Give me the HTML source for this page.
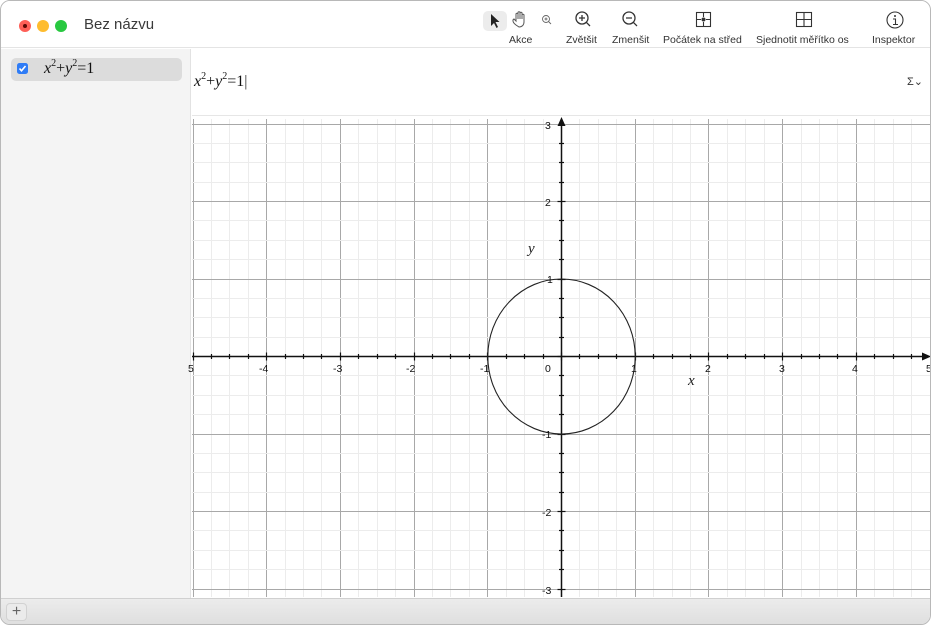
<!DOCTYPE html>
<html><head><meta charset="utf-8"><style>
*{margin:0;padding:0;box-sizing:border-box}
body{width:931px;height:625px;background:#fff;font-family:"Liberation Sans",sans-serif;overflow:hidden;position:relative}
.win{position:absolute;left:0;top:0;width:931px;height:625px;border:1px solid #b8b8b8;border-radius:10px;overflow:hidden;background:#fff}
.tb{position:absolute;left:0;top:0;width:931px;height:47px;border-bottom:1px solid #e4e4e4;background:#fff}
.dot{position:absolute;top:19px;width:12px;height:12px;border-radius:50%}
.title{position:absolute;left:83px;top:15px;font-size:15px;color:#3a3a3a}
.tl{position:absolute;top:33px;font-size:10.5px;color:#333;white-space:nowrap}
.side{position:absolute;left:0;top:48px;width:190px;height:549px;background:#f4f4f4;border-right:1px solid #e2e2e2}
.row{position:absolute;left:10px;top:57px;width:171px;height:23px;background:#dcdcdc;border-radius:5px}
.cb{position:absolute;left:16px;top:62px;width:11px;height:11px;background:#2f7cf6;border-radius:2.5px}
.cb svg{display:block}
.math{font-family:"Liberation Serif",serif;font-size:16px;color:#111;position:absolute}
.math i{font-style:italic}
.math sup{font-size:10px;vertical-align:7px;line-height:0}
.foot{position:absolute;left:0;top:597px;width:931px;height:28px;background:linear-gradient(#ececec,#dedede);border-top:1px solid #d0d0d0}
.plus{position:absolute;left:5px;top:602px;width:21px;height:18px;border:1px solid #d2d2d2;border-radius:4px;background:#ebebeb;font-size:16px;color:#666;text-align:center;line-height:16px}
</style></head><body><div class="win">
<div class="tb">
<div class="dot" style="left:18px;background:#fe5f57"></div>
<div style="position:absolute;left:22px;top:23px;width:4px;height:4px;border-radius:50%;background:#5a0a05"></div>
<div class="dot" style="left:36px;background:#febc2e"></div>
<div class="dot" style="left:54px;background:#28c840"></div>
<div class="title">Bez názvu</div>
<div style="position:absolute;left:482px;top:10px;width:24px;height:20px;background:#ececec;border-radius:5px"></div>
<svg style="position:absolute;left:470px;top:0" width="461" height="32" viewBox="0 0 461 32">
<path d="M20 13 L20 25 L23 22 L25.5 27 L27 26 L24.5 21 L28.5 21 Z" fill="#222"/>
<path d="M45 24 C42 22 41 19 43 18 L45 20 L45 13 C45 12 47 12 47 13 L47 18 L47 11.5 C47 10.5 49 10.5 49 11.5 L49 18 L49 12 C49 11 51 11 51 12 L51 18 L51 14 C51 13 53 13 53 14 L53 21 C53 24 51 26 48 26 Z" fill="none" stroke="#555" stroke-width="1"/>
<circle cx="75" cy="18" r="3.5" fill="none" stroke="#666" stroke-width="0.9"/><path d="M77.5 20.5 L80 23 M73.5 18 H76.5 M75 16.5 V19.5" stroke="#666" stroke-width="0.9"/>
<circle cx="111" cy="17" r="6" fill="none" stroke="#333" stroke-width="1.3"/><path d="M115.3 21.3 L119 25 M108 17 H114 M111 14 V20" stroke="#333" stroke-width="1.3"/>
<circle cx="158" cy="17" r="6" fill="none" stroke="#333" stroke-width="1.3"/><path d="M162.3 21.3 L166 25 M155 17 H161" stroke="#333" stroke-width="1.3"/>
<rect x="225.5" y="11.5" width="14" height="14" fill="none" stroke="#333" stroke-width="1.1"/><path d="M232.5 11.5 V16 M232.5 21 V25.5 M225.5 18.5 H230 M235 18.5 H239.5" stroke="#333" stroke-width="1.1"/><circle cx="232.5" cy="18.5" r="2" fill="#333"/>
<rect x="325.5" y="11.5" width="15" height="14" fill="none" stroke="#333" stroke-width="1.1"/><path d="M333 11.5 V25.5 M325.5 18.5 H340.5" stroke="#333" stroke-width="1.1"/>
<circle cx="424" cy="19" r="8" fill="none" stroke="#333" stroke-width="1.1"/><circle cx="424" cy="15" r="1" fill="#333"/><path d="M422 18 H424.5 V23 M422 23.5 H427" stroke="#333" stroke-width="1.1" fill="none"/>
</svg>
<div class="tl" style="left:508px">Akce</div>
<div class="tl" style="left:565px">Zvětšit</div>
<div class="tl" style="left:611px">Zmenšit</div>
<div class="tl" style="left:662px">Počátek na střed</div>
<div class="tl" style="left:755px">Sjednotit měřítko os</div>
<div class="tl" style="left:871px">Inspektor</div>
</div>
<div class="side"></div>
<div class="row"></div>
<div class="cb"><svg width="11" height="11" viewBox="0 0 11 11"><path d="M2.5 5.5 L4.5 7.8 L8.5 3" stroke="#fff" stroke-width="1.6" fill="none"/></svg></div>
<div class="math" style="left:43px;top:59px"><i>x</i><sup>2</sup>+<i>y</i><sup>2</sup>=1</div>
<div class="math" style="left:193px;top:72px"><i>x</i><sup>2</sup>+<i>y</i><sup>2</sup>=1<span style="font-style:normal;color:#333">|</span></div>
<div style="position:absolute;left:906px;top:74px;font-size:11px;color:#333">Σ⌄</div>
<svg id="g" style="position:absolute;left:0;top:0" width="931" height="625">
<line x1="191" y1="114.5" x2="931" y2="114.5" stroke="#e6e6e6" stroke-width="1"/>
<g id="grid"></g>
<ellipse cx="560.5" cy="355.5" rx="73.7" ry="77.5" fill="none" stroke="#222" stroke-width="1.1"/>
<g font-family="Liberation Sans, sans-serif" font-size="10.5" fill="#111">
<text x="187" y="371">5</text><text x="258" y="371">-4</text><text x="332" y="371">-3</text><text x="405" y="371">-2</text><text x="479" y="371">-1</text>
<text x="544" y="371">0</text><text x="630" y="371">1</text><text x="704" y="371">2</text><text x="778" y="371">3</text><text x="851" y="371">4</text><text x="925" y="371">5</text>
<text x="544" y="128">3</text><text x="544" y="205">2</text><text x="546" y="282">1</text><text x="541" y="437">-1</text><text x="541" y="515">-2</text><text x="541" y="593">-3</text>
</g>
<g font-family="Liberation Serif, serif" font-style="italic" font-size="15" fill="#222"><text x="687" y="384">x</text><text x="527" y="252">y</text></g>
</svg>
<div class="foot"></div>
<div class="plus">+</div>
</div>
<script>
var g=document.getElementById('grid'),s='',ox=560,oy=355,sx=73.7,sy=77.5;
function r(v){return Math.round(v)+0.5;}
for(var i=-24;i<=24;i++){var x=r(ox+i*sx/4);if(x<191||x>931)continue;var maj=i%4==0;
s+='<line x1="'+x+'" y1="118" x2="'+x+'" y2="596" stroke="'+(maj?'#a8a8a8':'#ececec')+'" stroke-width="1"/>';}
for(var j=-16;j<=16;j++){var y=r(oy+j*sy/4);if(y<118||y>596)continue;var maj=j%4==0;
s+='<line x1="191" y1="'+y+'" x2="931" y2="'+y+'" stroke="'+(maj?'#a8a8a8':'#ececec')+'" stroke-width="1"/>';}
s+='<line x1="191" y1="355.5" x2="926" y2="355.5" stroke="#111" stroke-width="1.5"/><line x1="560.5" y1="596" x2="560.5" y2="120" stroke="#111" stroke-width="1.5"/>';
s+='<path d="M930 355.5 L921 351.5 L921 359.5Z M560.5 116 L556.5 125 L564.5 125Z" fill="#111"/>';
for(var i=-24;i<=24;i++){var x=r(ox+i*sx/4);if(x<191||x>920)continue;var h=i%4==0?4:2.5;s+='<line x1="'+x+'" y1="'+(355.5-h)+'" x2="'+x+'" y2="'+(355.5+h)+'" stroke="#111" stroke-width="1.2"/>';}
for(var j=-16;j<=16;j++){var y=r(oy+j*sy/4);if(y<125||y>596)continue;var h=j%4==0?4:2.5;s+='<line x1="'+(560.5-h)+'" y1="'+y+'" x2="'+(560.5+h)+'" y2="'+y+'" stroke="#111" stroke-width="1.2"/>';}
g.innerHTML=s;
</script>
</body></html>
